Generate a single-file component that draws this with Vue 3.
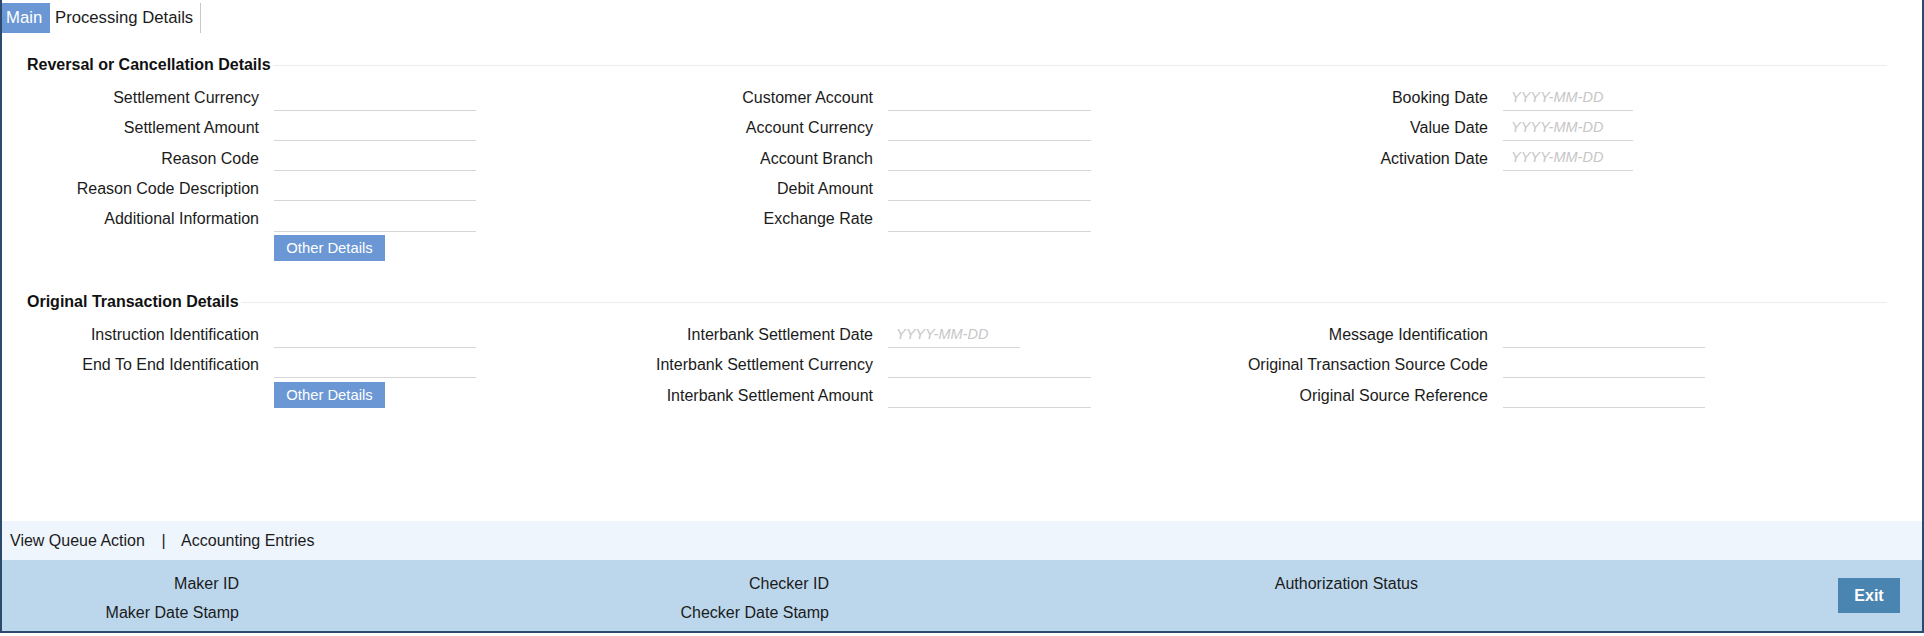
<script setup>
const sections = [
  {
    title: 'Reversal or Cancellation Details',
    columns: [
      { labels: ['Settlement Currency', 'Settlement Amount', 'Reason Code', 'Reason Code Description', 'Additional Information'], button: true },
      { labels: ['Customer Account', 'Account Currency', 'Account Branch', 'Debit Amount', 'Exchange Rate'] },
      { labels: ['Booking Date', 'Value Date', 'Activation Date'], date: [0, 1, 2] }
    ]
  },
  {
    title: 'Original Transaction Details',
    columns: [
      { labels: ['Instruction Identification', 'End To End Identification'], button: true },
      { labels: ['Interbank Settlement Date', 'Interbank Settlement Currency', 'Interbank Settlement Amount'], date: [0] },
      { labels: ['Message Identification', 'Original Transaction Source Code', 'Original Source Reference'] }
    ]
  }
]
</script>

<template>
  <div class="shell">
    <nav class="tabs">
      <a class="tab active">Main</a>
      <a class="tab">Processing Details</a>
    </nav>
    <main class="content">
      <section v-for="s in sections" :key="s.title" class="section">
        <header class="legend">
          <h2>{{ s.title }}</h2>
          <span class="rule"></span>
        </header>
        <div class="grid">
          <div v-for="(c, i) in s.columns" :key="i" class="col">
            <div v-for="(l, j) in c.labels" :key="l" class="field">
              <label>{{ l }}</label>
              <span v-if="c.date && c.date.includes(j)" class="input date">YYYY-MM-DD</span>
              <span v-else class="input"></span>
            </div>
            <button v-if="c.button" class="other">Other Details</button>
          </div>
        </div>
      </section>
    </main>
    <div class="links">
      <a>View Queue Action</a>
      <span class="sep">|</span>
      <a>Accounting Entries</a>
    </div>
    <footer class="audit">
      <div class="audit-col first">
        <span>Maker ID</span>
        <span>Maker Date Stamp</span>
      </div>
      <div class="audit-col second">
        <span>Checker ID</span>
        <span>Checker Date Stamp</span>
      </div>
      <div class="audit-col third">
        <span>Authorization Status</span>
      </div>
      <button class="exit">Exit</button>
    </footer>
  </div>
</template>

<style>
html, body { margin: 0; background: #fff; }
</style>

<style scoped>
.shell {
  box-sizing: border-box;
  width: 1924px;
  height: 633px;
  display: flex;
  flex-direction: column;
  border: 2px solid #2c4a6e;
  border-top: 0;
  font-family: "Liberation Sans", Arial, sans-serif;
  font-size: 16px;
  color: #1b1b1b;
  overflow: hidden;
}
.tabs {
  display: flex;
  height: 30px;
  margin-top: 3px;
  font-size: 16.7px;
  white-space: nowrap;
}
.tab {
  display: flex;
  align-items: center;
  padding: 0 8px 0 5px;
}
.tab.active {
  width: 48px;
  box-sizing: border-box;
  padding: 0 0 0 4px;
  background: #6b98d5;
  color: #fff;
}
.tab + .tab {
  border-right: 1px solid #c8c8c8;
  width: 151px;
  box-sizing: border-box;
}
.content { flex: 1; }
.section { padding-left: 25px; }
.section:first-child { height: 258px; padding-top: 21px; box-sizing: border-box; }
.legend {
  display: flex;
  align-items: center;
  height: 20px;
  margin-right: 35px;
  margin-bottom: 7px;
}
.legend h2 {
  margin: 0;
  padding-top: 2px;
  font-size: 16px;
  font-weight: 700;
  color: #111;
  white-space: nowrap;
}
.rule {
  flex: 1;
  height: 1px;
  margin: 3px 0 0 2px;
  background: #ececec;
}
.grid {
  display: grid;
  grid-template-columns: 474px 615px 1fr;
  margin-left: -25px;
}
.field {
  display: flex;
  height: 30px;
}
.col:nth-child(1) .field label { width: 257px; }
.col:nth-child(2) .field label { width: 397px; }
.col:nth-child(3) .field label { width: 397px; }
label {
  box-sizing: border-box;
  flex: none;
  padding-top: 8px;
  text-align: right;
  white-space: nowrap;
  line-height: 18px;
}
.field:nth-child(n+3) label { padding-top: 9px; }
.input {
  box-sizing: border-box;
  flex: none;
  width: 202px;
  height: 30px;
  margin-left: 15px;
  padding: 8px 0 0 8px;
  border-bottom: 1px solid #d6d6d6;
  font-style: italic;
  font-size: 14.5px;
  line-height: 16px;
  color: #c6c6c6;
}
.col:nth-child(2) .input { width: 203px; }
.input.date { width: 130px; }
.col:nth-child(2) .input.date { width: 132px; }
.field:nth-child(5) { height: 31px; }
.field:nth-child(5) .input { height: 31px; }
.other {
  display: block;
  width: 111px;
  height: 26px;
  margin: 4px 0 0 272px;
  padding: 0;
  border: 0;
  background: #6b98d5;
  color: #fff;
  font: 14.8px "Liberation Sans", Arial, sans-serif;
}
.field:nth-child(5) + .other { margin-top: 3px; }
.links {
  display: flex;
  align-items: center;
  height: 39px;
  padding-left: 8px;
  background: #eef5fd;
}
.sep { margin: 0 15.5px 0 16.5px; }
.audit {
  display: flex;
  height: 71px;
  box-sizing: border-box;
  padding: 15px 22px 0 0;
  background: #bcd7ec;
}
.audit-col {
  display: flex;
  flex-direction: column;
  align-items: flex-end;
  row-gap: 11px;
  line-height: 18px;
  white-space: nowrap;
}
.audit-col.first { width: 237px; }
.audit-col.second { width: 590px; }
.audit-col.third { width: 589px; }
.exit {
  width: 62px;
  height: 35px;
  margin: 3px 0 0 auto;
  padding: 0;
  border: 0;
  background: #4a84b0;
  color: #fff;
  font: 700 16px "Liberation Sans", Arial, sans-serif;
}
</style>
